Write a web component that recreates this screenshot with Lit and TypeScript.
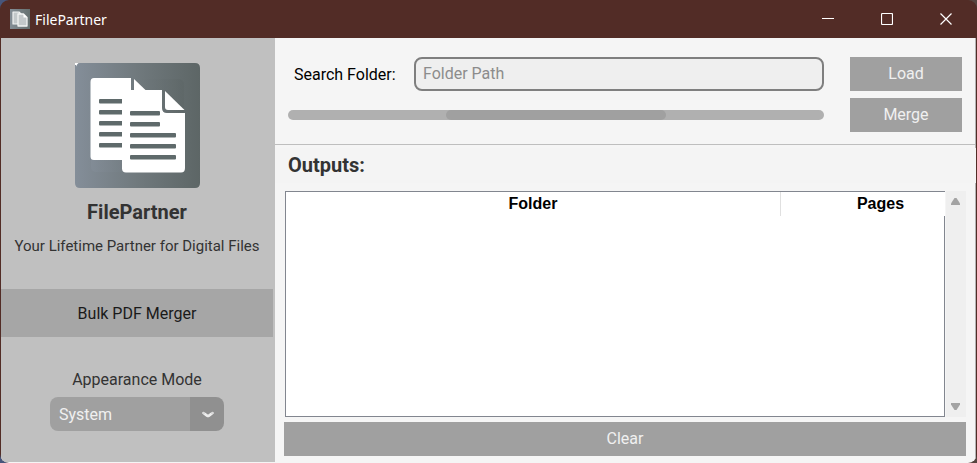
import { LitElement, css, html, svg } from "lit";
import { customElement, state } from "lit/decorators.js";

const backLines = [36, 47, 58, 69, 80];
const frontLines = [
  { y: 48, w: 30 },
  { y: 59, w: 30 },
  { y: 70, w: 46 },
  { y: 81, w: 46 },
  { y: 92, w: 46 },
];

@customElement("app-logo")
export class AppLogo extends LitElement {
  static styles = css`
    :host { display: block; width: 125px; height: 125px; }
    svg { display: block; }
  `;

  render() {
    return html`<svg width="125" height="125" viewBox="0 0 125 125" role="img" aria-label="FilePartner logo">
      <defs>
        <linearGradient id="bg" x1="0" x2="1" y1="0" y2="0">
          <stop offset="0" stop-color="#848e99"></stop>
          <stop offset="0.5" stop-color="#70797d"></stop>
          <stop offset="1" stop-color="#5d6666"></stop>
        </linearGradient>
      </defs>
      <path d="M0 0H3V3H0Z" fill="#fff"></path>
      <path d="M1 4Q2 0 5 0H120Q125 0 125 5V120Q125 125 120 125H5Q0 125 0 120V2H1Z" fill="url(#bg)"></path>
      <rect x="16" y="16" width="93" height="93" rx="5" fill="url(#bg)" opacity="0.6"></rect>
      <path d="M19 15H56V27H47V97H19Q15.500 97 15.500 93.500V19Q15.500 15 19 15Z" fill="#fff"></path>
      <path d="M59 16L71 27.500H59Z" fill="#fff"></path>
      <path d="M47 27H87V45Q87 50 92 50H110V105Q110 109.500 106 109.500H51Q47 109.500 47 105.500Z" fill="#fff"></path>
      <path d="M90 28L109.500 47H93Q90 47 90 44Z" fill="#fff"></path>
      ${backLines.map((y) => svg`<path d="M25 ${y}H47V${y + 4.6}H25Q24 ${y + 4.6} 24 ${y + 3.6}V${y + 1}Q24 ${y} 25 ${y}Z" fill="#5f6a6b"></path>`)}
      ${frontLines.map((l) => svg`<rect x="55" y=${l.y} width=${l.w} height="4.600" rx="1" fill="#5f6a6b"></rect>`)}
    </svg>`;
  }
}

@customElement("app-root")
export class AppRoot extends LitElement {
  @state() private mode = "System";

  static styles = css`
    :host {
      display: block;
      background: linear-gradient(to right, #47567c 50%, #55443f 50%);
      font-family: Roboto, "Liberation Sans", sans-serif;
      font-size: 16px;
      line-height: 20px;
      color: #333;
    }
    * { box-sizing: border-box; }
    button, input, select { font: inherit; margin: 0; border: 0; border-radius: 0; }
    h1, h2, p { margin: 0; }
    svg { display: block; }
    .window {
      display: flex;
      flex-direction: column;
      min-height: 100vh;
      border-radius: 9px;
      overflow: hidden;
      background: #522c26;
      padding: 0 1px;
    }
    .titlebar {
      display: flex;
      align-items: center;
      height: 38px;
      padding: 0 1px 0 9px;
      color: #fff;
    }
    .caption {
      flex: 1;
      padding: 2px 0 0 5px;
      font-family: "Noto Sans", sans-serif;
      font-size: 14px;
    }
    .winbtn {
      display: grid;
      place-items: center;
      width: 59px;
      height: 38px;
      padding: 0;
      background: none;
      color: inherit;
    }
    .body {
      flex: 1;
      display: grid;
      grid-template-columns: 274px minmax(0, 1fr);
      background: #f5f5f5;
    }
    .sidebar {
      display: flex;
      flex-direction: column;
      align-items: center;
      background: #c0c0c0;
      padding: 25px 2px 0 0;
      margin-bottom: 1px;
    }
    .brand, .heading { font-size: 20px; line-height: 24px; font-weight: 700; }
    .brand { margin-top: 12px; }
    .tagline { font-size: 15px; margin-top: 12px; white-space: nowrap; }
    .nav { width: 100%; margin-top: 33px; }
    .navbtn { width: 100%; height: 48px; padding: 2px 0 0; background: #a6a6a6; color: #1a1a1a; }
    .modelabel { margin: 33px 0 7px; }
    .picker { position: relative; width: 174px; }
    .picker select {
      display: block;
      width: 100%;
      height: 34px;
      padding: 2px 42px 0 9px;
      appearance: none;
      border-radius: 8px;
      color: #f0f0f0;
      background: linear-gradient(to right, #a0a0a0 140px, #909090 140px);
    }
    .picker svg { position: absolute; top: 14px; right: 10px; pointer-events: none; }
    .main {
      display: flex;
      flex-direction: column;
      border-right: 1px solid #b4b4b4;
    }
    .controls {
      display: grid;
      grid-template-columns: minmax(0, 1fr) 112px;
      column-gap: 26px;
      row-gap: 7px;
      align-items: center;
      padding: 19px 13px 12px;
      border-bottom: 1px solid #bebebe;
    }
    .search { display: flex; align-items: center; padding-left: 6px; color: #000; }
    .search label { width: 120px; padding-top: 2px; }
    .search input {
      flex: 1;
      min-width: 0;
      height: 34px;
      padding: 0 7px 2px;
      border: 2px solid #7f7f7f;
      border-radius: 8px;
      background: #efefef;
      color: #333;
      outline: none;
    }
    .search input::placeholder { color: #8c8c8c; opacity: 1; }
    .action { height: 34px; background: #a0a0a0; color: #f0f0f0; }
    .track { height: 10px; border-radius: 5px; background: #b0b0b0; display: flex; justify-content: center; }
    .bar { width: 41%; border-radius: 5px; background: #a0a0a0; }
    .heading {
      margin: 3px -1px 8px 0;
      padding: 5px 13px 6px;
      background: #f4f4f4;
    }
    .outputs {
      flex: 1;
      display: flex;
      flex-direction: column;
      gap: 5px;
      padding: 0 9px 7px;
    }
    .listing { flex: 1; display: flex; gap: 1px; padding-left: 1px; }
    .sheet {
      flex: 1;
      min-width: 0;
      min-height: 100px;
      overflow: hidden;
      display: flex;
      flex-direction: column;
      border: solid #82868f;
      border-width: 1px 0 1px 1px;
      background: #fff;
    }
    table {
      width: calc(100% + 35px);
      table-layout: fixed;
      border-collapse: separate;
      border-spacing: 0;
      font-family: "Liberation Sans", Arial, sans-serif;
      color: #000;
    }
    th { height: 24px; padding: 0; font-weight: 700; line-height: 20px; }
    th + th { width: 200px; border-left: 1px solid #e0e0e0; }
    .rows { flex: 1; border-right: 1px solid #82868f; }
    .scroll {
      width: 20px;
      display: flex;
      flex-direction: column;
      justify-content: space-between;
      background: #efefef;
    }
    .arrow { display: grid; place-items: center; width: 20px; height: 21px; padding: 0 1px 0 0; background: none; }
  `;

  render() {
    return html`
      <div class="window">
        <header class="titlebar">
          <svg width="20" height="20" viewBox="0 0 20 20" aria-hidden="true">
            <defs>
              <linearGradient id="ti" x1="0" x2="1"><stop stop-color="#848e96"></stop><stop offset="1" stop-color="#657070"></stop></linearGradient>
            </defs>
            <rect width="20" height="20" fill="url(#ti)"></rect>
            <path d="M3 3H9L11 5V15H3Z" fill="#c3c8ca" stroke="#f2f3f3" stroke-width="1.200" stroke-linejoin="round"></path>
            <path d="M8 5H13.500L17 8.500V17H8Z" fill="#c3c8ca" stroke="#f2f3f3" stroke-width="1.300" stroke-linejoin="round"></path>
            <path d="M13.500 5V8.500H17Z" fill="#fff"></path>
          </svg>
          <span class="caption">FilePartner</span>
          <button class="winbtn" aria-label="Minimize">
            <svg width="12" height="12" viewBox="0 0 12 12"><path d="M0 5.500H12" stroke="#fff"></path></svg>
          </button>
          <button class="winbtn" aria-label="Maximize">
            <svg width="12" height="12" viewBox="0 0 12 12"><rect x="0.500" y="0.500" width="11" height="11" rx="1" fill="none" stroke="#fff" stroke-width="1.200"></rect></svg>
          </button>
          <button class="winbtn" aria-label="Close">
            <svg width="12" height="12" viewBox="0 0 12 12"><path d="M0.500 0.500L11.500 11.500M11.500 0.500L0.500 11.500" stroke="#fff" stroke-width="1.200"></path></svg>
          </button>
        </header>
        <div class="body">
          <aside class="sidebar">
            <app-logo></app-logo>
            <h1 class="brand">FilePartner</h1>
            <p class="tagline">Your Lifetime Partner for Digital Files</p>
            <nav class="nav"><button class="navbtn">Bulk PDF Merger</button></nav>
            <label class="modelabel" for="mode">Appearance Mode</label>
            <div class="picker">
              <select id="mode" .value=${this.mode} @change=${(e: Event) => (this.mode = (e.target as HTMLSelectElement).value)}>
                <option>System</option>
                <option>Light</option>
                <option>Dark</option>
              </select>
              <svg width="12" height="8" viewBox="0 0 12 8" aria-hidden="true">
                <path d="M1.500 2L5 4.600Q6 5.300 7 4.600L10.500 2" fill="none" stroke="#ececec" stroke-width="2.600" stroke-linecap="round" stroke-linejoin="round"></path>
                <path d="M1.500 1.500h1v1h-1zM9.500 1.500h1v1h-1z" fill="#a4a4a4"></path>
              </svg>
            </div>
          </aside>
          <main class="main">
            <section class="controls">
              <div class="search">
                <label for="path">Search Folder:</label>
                <input id="path" type="text" placeholder="Folder Path" />
              </div>
              <button class="action">Load</button>
              <div class="track" role="progressbar" aria-label="Merge progress"><div class="bar"></div></div>
              <button class="action">Merge</button>
            </section>
            <h2 class="heading">Outputs:</h2>
            <section class="outputs">
              <div class="listing">
                <div class="sheet">
                  <table>
                    <thead><tr><th scope="col">Folder</th><th scope="col">Pages</th></tr></thead>
                    <tbody></tbody>
                  </table>
                  <div class="rows"></div>
                </div>
                <div class="scroll">
                  <button class="arrow" aria-label="Scroll up">
                    <svg width="9" height="7" viewBox="0 0 9 7"><path d="M3.500 0H5.500L9 5.500V7H0V5.500Z" fill="#a3a3a3"></path></svg>
                  </button>
                  <button class="arrow" aria-label="Scroll down">
                    <svg width="9" height="7" viewBox="0 0 9 7"><path d="M3.500 7H5.500L9 1.500V0H0V1.500Z" fill="#a3a3a3"></path></svg>
                  </button>
                </div>
              </div>
              <button class="action">Clear</button>
            </section>
          </main>
        </div>
      </div>
    `;
  }
}
